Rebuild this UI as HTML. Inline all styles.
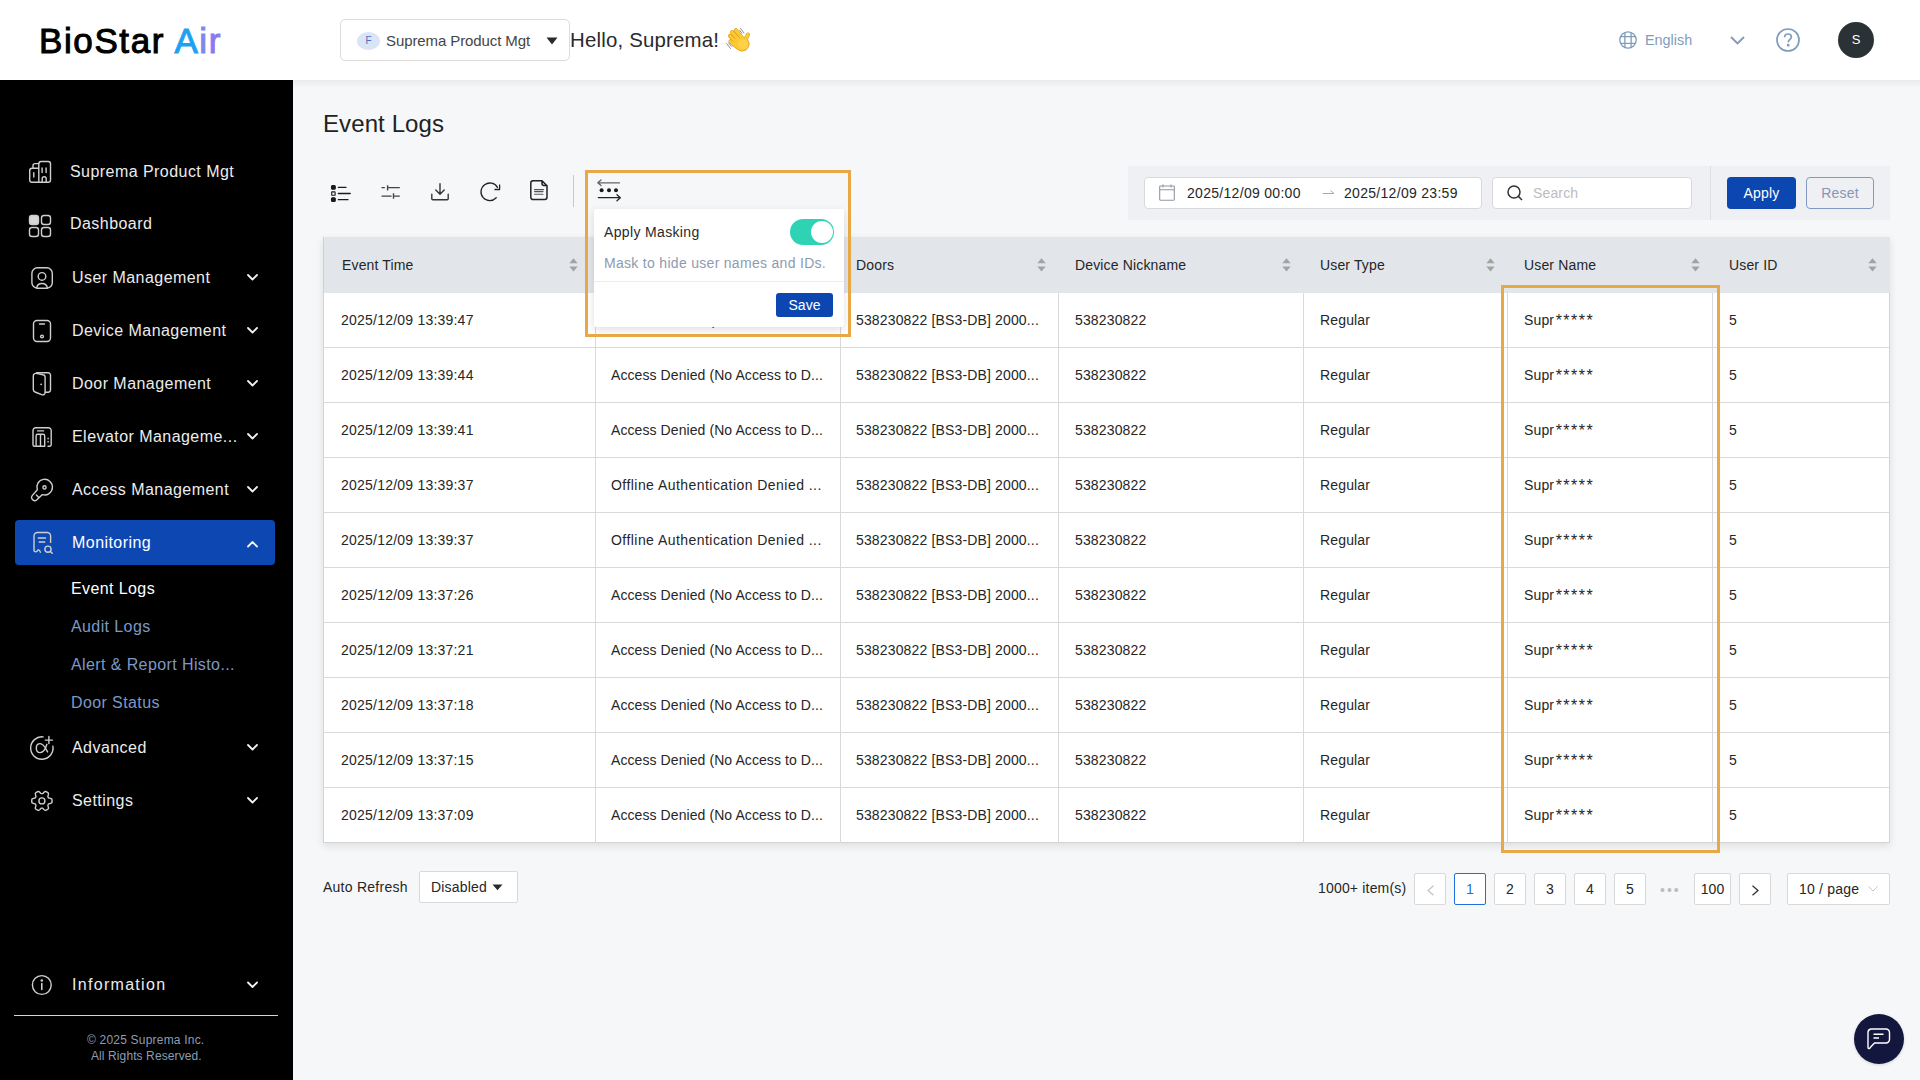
<!DOCTYPE html>
<html><head><meta charset="utf-8">
<style>
*{box-sizing:border-box;margin:0;padding:0}
html,body{width:1920px;height:1080px;overflow:hidden;background:#f6f7f9;font-family:"Liberation Sans",sans-serif;color:#222}
.t{position:absolute;white-space:nowrap;line-height:20px}
#header{position:absolute;left:0;top:0;width:1920px;height:80px;background:#fff;z-index:5}
#hshadow{position:absolute;left:293px;top:80px;width:1627px;height:8px;background:linear-gradient(rgba(0,0,0,0.05),rgba(0,0,0,0));z-index:5}
#sidebar{position:absolute;left:0;top:80px;width:293px;height:1000px;background:#000;z-index:4}
.nv{position:absolute;left:72px;margin-top:1px;font-size:16px;color:#ececec;letter-spacing:0.45px;white-space:nowrap;line-height:20px}
.sb{position:absolute;left:71px;margin-top:1px;font-size:16px;color:#7d98c6;letter-spacing:0.4px;white-space:nowrap;line-height:20px}
svg{position:absolute;overflow:visible}
.z6{position:absolute;left:0;top:0;width:0;height:0;z-index:6}
</style></head><body>
<!-- HEADER -->
<div id="header">
  <div class="t" style="left:39px;top:20.5px;font-size:35px;line-height:40px;letter-spacing:1.6px;color:#000;-webkit-text-stroke:1px #000">BioStar <span style="color:#1ea2ef;-webkit-text-stroke:1px #1ea2ef">A</span><span style="color:#7d86f0;-webkit-text-stroke:1px #7d86f0">i</span><span style="color:#8c79ef;-webkit-text-stroke:1px #8c79ef">r</span></div>
  <div style="position:absolute;left:340px;top:19px;width:230px;height:42px;border:1px solid #dcdcdc;border-radius:5px;background:#fff"></div>
  <div style="position:absolute;left:357px;top:32px;width:23px;height:18px;border-radius:50%;background:#d9e4f7;color:#4a6fbd;font-size:10px;line-height:18px;text-align:center">F</div>
  <div class="t" style="left:386px;top:31px;font-size:15px;color:#454545;letter-spacing:-0.1px">Suprema Product Mgt</div>
  <svg style="left:546px;top:37px" width="12" height="8"><path d="M0.5 0.5 L11.5 0.5 L6 7.5 Z" fill="#2a2a2a"/></svg>
  <div class="t" style="left:570px;top:28px;font-size:20.4px;line-height:24px;color:#2a2a2a;letter-spacing:0.2px">Hello, Suprema!</div>
  <!-- waving hand -->
  <svg style="left:720px;top:22px" width="36" height="36" viewBox="0 0 36 36" stroke-linecap="round">
    <g stroke="#e3a21e" stroke-width="4.2" fill="none">
      <path d="M15.8 8.3 L22.5 16.5 M12 10.2 L19.5 18.5 M10 14 L18 21.5 M10.5 19.5 L17.5 24.8 M27.9 12.6 L25 18.5"/>
    </g>
    <path d="M16.5 15 L25 16.5 Q28.6 18 29 20.5 Q29.5 25.5 25.5 28.3 Q21.5 30.3 17.5 27.5 L11.5 22.5 Z" fill="#fcc935" stroke="#e3a21e" stroke-width="0.9"/>
    <g stroke="#fcc935" stroke-width="3" fill="none">
      <path d="M15.8 8.3 L22.5 16.5 M12 10.2 L19.5 18.5 M10 14 L18 21.5 M10.5 19.5 L17.5 24.8 M27.9 12.6 L25 18.5"/>
    </g>
    <ellipse cx="23" cy="22.5" rx="5" ry="5" fill="#fdd24a"/>
    <g stroke="#6e6e6e" stroke-width="0.9" fill="none" opacity="0.85">
      <path d="M20.5 6.3 L24 11 M19.5 8.2 L22 11.3 M6.5 21.5 L10.5 26.5 M8.5 21 L11.8 24.5"/>
    </g>
  </svg>
  <!-- globe -->
  <svg style="left:1619px;top:31px" width="18" height="18" viewBox="0 0 18 18" fill="none" stroke="#7f9dbb" stroke-width="1.3">
    <circle cx="9" cy="9" r="8.2"/><path d="M6 1.3 Q5.6 9 6 16.7 M12 1.3 Q12.4 9 12 16.7 M1.2 5.6 H16.8 M1.2 12.4 H16.8"/>
  </svg>
  <div class="t" style="left:1645px;top:30px;font-size:14.4px;color:#7f9dbb">English</div>
  <svg style="left:1730px;top:36px" width="15" height="9" viewBox="0 0 15 9"><path d="M1 1 L7.5 7.5 L14 1" fill="none" stroke="#7f9dbb" stroke-width="1.9"/></svg>
  <svg style="left:1776px;top:28px" width="24" height="24" viewBox="0 0 24 24" fill="none" stroke="#7f9dbb" stroke-width="1.7">
    <circle cx="12" cy="12" r="11"/><path d="M8.6 9.3 C8.6 7.2 10.1 6 12 6 C13.9 6 15.4 7.2 15.4 9 C15.4 11.3 12.2 11.6 12.2 14.2"/><circle cx="12.2" cy="17.3" r="0.6" fill="#7f9dbb"/>
  </svg>
  <div style="position:absolute;left:1838px;top:22px;width:36px;height:36px;border-radius:50%;background:#2b3236;color:#fff;font-size:13px;line-height:36px;text-align:center">S</div>
</div>
<div id="hshadow"></div>
<!-- SIDEBAR -->
<div id="sidebar">
  <div style="position:absolute;left:15px;top:440px;width:260px;height:45px;border-radius:4px;background:#0d48b2"></div>
  <div style="position:absolute;left:14px;top:935px;width:264px;height:1px;background:#d4d4d4"></div>
</div>
<div class="z6">
  <div class="nv" style="left:70px;top:161px">Suprema Product Mgt</div>
  <div class="nv" style="left:70px;top:213px">Dashboard</div>
  <div class="nv" style="top:267px">User Management</div>
  <div class="nv" style="top:320px">Device Management</div>
  <div class="nv" style="top:373px">Door Management</div>
  <div class="nv" style="top:426px">Elevator Manageme...</div>
  <div class="nv" style="top:479px">Access Management</div>
  <div class="nv" style="top:532px;color:#fff">Monitoring</div>
  <div class="sb" style="top:578px;color:#fff">Event Logs</div>
  <div class="sb" style="top:616px">Audit Logs</div>
  <div class="sb" style="top:654px">Alert &amp; Report Histo...</div>
  <div class="sb" style="top:692px">Door Status</div>
  <div class="nv" style="top:737px">Advanced</div>
  <div class="nv" style="top:790px">Settings</div>
  <div class="nv" style="top:974px;letter-spacing:1.3px">Information</div>
  <div class="t" style="left:87px;top:1032px;font-size:12px;line-height:16px;color:#8d9cb3;letter-spacing:0.2px">© 2025 Suprema Inc.</div>
  <div class="t" style="left:91px;top:1048px;font-size:12px;line-height:16px;color:#8d9cb3;letter-spacing:0.1px">All Rights Reserved.</div>
  <!-- sidebar icons -->
  <svg style="left:0;top:0" width="293" height="1080" fill="none" stroke="#cfcfcf" stroke-width="1.4" stroke-linecap="round" stroke-linejoin="round">
    <!-- building -->
    <path d="M38.8 182.2 V163.8 a2.3 2.3 0 0 1 2.3-2.3 H48.2 a2.3 2.3 0 0 1 2.3 2.3 V179.9 a2.3 2.3 0 0 1-2.3 2.3 H32 a2.3 2.3 0 0 1-2.3-2.3 V170.6 a2.3 2.3 0 0 1 2.3-2.3 H38.8"/>
    <path d="M33 168.3 V165.6 a2 2 0 0 1 2-2 H38.8"/>
    <path d="M33.8 172.6 V177 M42.1 168 V172.5 M46.1 168 V172.5 M42.2 182.2 V178.8 a2 2 0 0 1 4 0 V182.2"/>
    <!-- dashboard -->
    <rect x="29.5" y="215.5" width="9" height="9" rx="2.5" fill="#d8d8d8"/>
    <rect x="41.5" y="215.5" width="9" height="9" rx="2.5"/>
    <rect x="29.5" y="227.5" width="9" height="9" rx="2.5"/>
    <rect x="41.5" y="227.5" width="9" height="9" rx="2.5"/>
    <!-- user -->
    <rect x="31.9" y="267.8" width="20.4" height="20.4" rx="5.5"/>
    <circle cx="42" cy="276.4" r="3.8"/>
    <path d="M36.6 288 C37.6 282 46.4 282 47.4 288"/>
    <!-- device -->
    <rect x="33.5" y="320.5" width="17" height="21" rx="3.5"/>
    <path d="M39.5 324 H44.5"/><circle cx="42" cy="336.5" r="1.4"/>
    <!-- door -->
    <path d="M33.3 376 a2.6 2.6 0 0 1 2.9-2.6 L43 374.8 a2.5 2.5 0 0 1 2.1 2.5 V392.6 a2.2 2.2 0 0 1-2.8 2.2 L35 392 a2.6 2.6 0 0 1-1.7-2.4 Z"/>
    <path d="M36.5 372.8 H48.2 a2.3 2.3 0 0 1 2.3 2.3 V389.9 a2.3 2.3 0 0 1-2.3 2.3 H45.2"/>
    <circle cx="41.1" cy="384.3" r="0.9" fill="#cfcfcf" stroke="none"/>
    <!-- elevator -->
    <path d="M35.2 446.3 H34.5 a1.5 1.5 0 0 1-1.5-1.5 V430.5 a2.8 2.8 0 0 1 2.8-2.8 H48.4 a2.8 2.8 0 0 1 2.8 2.8 V444.8 a1.5 1.5 0 0 1-1.5 1.5 H48"/>
    <path d="M37.6 430.9 H43.6 M36.1 446.3 V435.9 a1.7 1.7 0 0 1 1.7-1.7 H43 a1.7 1.7 0 0 1 1.7 1.7 V446.3 H36.1 M40.5 434.2 V446.3 M48.1 438.3 V438.8 M48.1 441.5 V442"/>
    <!-- key -->
    <path d="M37.3 489.8 A7.8 7.8 0 1 1 42.4 494.6 L36.6 500 Q34.8 501.4 33.1 500.1 L31.9 498.8 Q30.9 497.2 32.2 495.6 Z"/>
    <circle cx="44.5" cy="487.4" r="1.6"/>
    <path d="M36.4 495.1 L38.6 497.2"/>
    <!-- monitoring -->
    <path d="M50.6 542.4 V536 a3.5 3.5 0 0 0-3.5-3.5 H37.5 a3.5 3.5 0 0 0-3.5 3.5 V550.3 a1.8 1.8 0 0 0 2.8 1.2 C38.3 549.3 39.2 549 40.4 552.2"/>
    <path d="M38.3 538 H45.5 M39.2 542 H44.8"/>
    <circle cx="48" cy="549.2" r="3.1"/><path d="M50.2 551.4 L52.3 553.3"/>
    <!-- advanced -->
    <path d="M43.1 736.9 A11.2 11.2 0 1 0 52.9 746.2"/>
    <path d="M45.3 740.1 H52.5 M48.9 736.5 V743.6"/>
    <path d="M46.9 744.3 C45.9 747.8 44.5 752.6 40.1 752.6 C37.6 752.6 36.3 750.6 36.3 748.3 C36.3 745.5 38 743.6 40.2 743.6 C43.5 743.6 45.4 748 47.6 751.9"/>
    <!-- settings -->
    <path d="M52.05 800.90 L52.05 801.17 L52.04 801.43 L52.02 801.70 L51.99 801.96 L51.96 802.22 L51.93 802.49 L51.85 802.74 L51.49 802.94 L51.11 803.11 L50.72 803.26 L50.33 803.40 L49.95 803.52 L49.58 803.62 L49.23 803.72 L48.92 803.81 L48.64 803.90 L48.44 804.02 L48.36 804.19 L48.27 804.36 L48.18 804.52 L48.08 804.69 L47.98 804.85 L47.87 805.01 L47.87 805.24 L47.93 805.52 L48.01 805.84 L48.10 806.19 L48.19 806.56 L48.28 806.95 L48.36 807.36 L48.42 807.77 L48.46 808.19 L48.47 808.60 L48.29 808.79 L48.08 808.95 L47.87 809.11 L47.65 809.26 L47.43 809.41 L47.20 809.55 L46.98 809.69 L46.74 809.82 L46.51 809.94 L46.27 810.06 L46.03 810.17 L45.78 810.28 L45.54 810.38 L45.28 810.44 L44.93 810.23 L44.59 809.99 L44.26 809.72 L43.95 809.45 L43.66 809.18 L43.38 808.91 L43.13 808.66 L42.89 808.43 L42.67 808.23 L42.47 808.13 L42.28 808.14 L42.09 808.15 L41.90 808.15 L41.71 808.15 L41.52 808.14 L41.33 808.13 L41.13 808.23 L40.91 808.43 L40.67 808.66 L40.42 808.91 L40.14 809.18 L39.85 809.45 L39.54 809.72 L39.21 809.99 L38.87 810.23 L38.52 810.44 L38.26 810.38 L38.02 810.28 L37.77 810.17 L37.53 810.06 L37.29 809.94 L37.06 809.82 L36.83 809.69 L36.60 809.55 L36.37 809.41 L36.15 809.26 L35.93 809.11 L35.72 808.95 L35.51 808.79 L35.33 808.60 L35.34 808.19 L35.38 807.77 L35.44 807.36 L35.52 806.95 L35.61 806.56 L35.70 806.19 L35.79 805.84 L35.87 805.52 L35.93 805.24 L35.93 805.01 L35.82 804.85 L35.72 804.69 L35.62 804.52 L35.53 804.36 L35.44 804.19 L35.36 804.02 L35.16 803.90 L34.88 803.81 L34.57 803.72 L34.22 803.62 L33.85 803.52 L33.47 803.40 L33.08 803.26 L32.69 803.11 L32.31 802.94 L31.95 802.74 L31.87 802.49 L31.84 802.22 L31.81 801.96 L31.78 801.70 L31.76 801.43 L31.75 801.17 L31.75 800.90 L31.75 800.63 L31.76 800.37 L31.78 800.10 L31.81 799.84 L31.84 799.58 L31.87 799.31 L31.95 799.06 L32.31 798.86 L32.69 798.69 L33.08 798.54 L33.47 798.40 L33.85 798.28 L34.22 798.18 L34.57 798.08 L34.88 797.99 L35.16 797.90 L35.36 797.78 L35.44 797.61 L35.53 797.44 L35.62 797.27 L35.72 797.11 L35.82 796.95 L35.93 796.79 L35.93 796.56 L35.87 796.28 L35.79 795.96 L35.70 795.61 L35.61 795.24 L35.52 794.85 L35.44 794.44 L35.38 794.03 L35.34 793.61 L35.33 793.20 L35.51 793.01 L35.72 792.85 L35.93 792.69 L36.15 792.54 L36.37 792.39 L36.60 792.25 L36.82 792.11 L37.06 791.98 L37.29 791.86 L37.53 791.74 L37.77 791.63 L38.02 791.52 L38.26 791.42 L38.52 791.36 L38.87 791.57 L39.21 791.81 L39.54 792.08 L39.85 792.35 L40.14 792.62 L40.42 792.89 L40.67 793.14 L40.91 793.37 L41.13 793.57 L41.33 793.67 L41.52 793.66 L41.71 793.65 L41.90 793.65 L42.09 793.65 L42.28 793.66 L42.47 793.67 L42.67 793.57 L42.89 793.37 L43.13 793.14 L43.38 792.89 L43.66 792.62 L43.95 792.35 L44.26 792.08 L44.59 791.81 L44.93 791.57 L45.28 791.36 L45.54 791.42 L45.78 791.52 L46.03 791.63 L46.27 791.74 L46.51 791.86 L46.74 791.98 L46.98 792.11 L47.20 792.25 L47.43 792.39 L47.65 792.54 L47.87 792.69 L48.08 792.85 L48.29 793.01 L48.47 793.20 L48.46 793.61 L48.42 794.03 L48.36 794.44 L48.28 794.85 L48.19 795.24 L48.10 795.61 L48.01 795.96 L47.93 796.28 L47.87 796.56 L47.87 796.79 L47.98 796.95 L48.08 797.11 L48.18 797.27 L48.27 797.44 L48.36 797.61 L48.44 797.78 L48.64 797.90 L48.92 797.99 L49.23 798.08 L49.58 798.18 L49.95 798.28 L50.33 798.40 L50.72 798.54 L51.11 798.69 L51.49 798.86 L51.85 799.06 L51.93 799.31 L51.96 799.58 L51.99 799.84 L52.02 800.10 L52.04 800.37 L52.05 800.63 Z"/>
    <circle cx="41.9" cy="800.9" r="3"/>
    <!-- info -->
    <circle cx="41.8" cy="985" r="9.4"/>
    <path d="M41.8 983.5 V989.5" stroke-width="1.6"/><circle cx="41.8" cy="980.5" r="0.6" fill="#cfcfcf"/>
    <!-- chevrons -->
    <g stroke="#f2f2f2" stroke-width="1.8">
      <path d="M248 275 L252.5 279.5 L257 275"/>
      <path d="M248 328 L252.5 332.5 L257 328"/>
      <path d="M248 381 L252.5 385.5 L257 381"/>
      <path d="M248 434 L252.5 438.5 L257 434"/>
      <path d="M248 487 L252.5 491.5 L257 487"/>
      <path d="M248 546.5 L252.5 542 L257 546.5"/>
      <path d="M248 745 L252.5 749.5 L257 745"/>
      <path d="M248 798 L252.5 802.5 L257 798"/>
      <path d="M248 982.5 L252.5 987 L257 982.5"/>
    </g>
  </svg>
</div>
<!-- MAIN -->
<style>.td{font-size:14px;color:#262626;letter-spacing:0.15px;line-height:20px}.pg{position:absolute;top:873px;width:32px;height:32px;background:#fff;border:1px solid #d9d9d9;border-radius:2px;font-size:14px;line-height:30px;text-align:center;color:#262626}</style>
<div class="t" style="left:323px;top:109px;font-size:24px;line-height:30px;color:#222;letter-spacing:0.1px">Event Logs</div>
<div id="tbl" style="position:absolute;left:323px;top:237px;width:1567px;height:606px;background:#fff;border:1px solid #d4d4d4;border-top:none;box-shadow:0 3px 8px rgba(0,0,0,0.10)"></div>
<div style="position:absolute;left:323px;top:237px;width:1567px;height:56px;background:#e2e5ea;border-left:1px solid #cdd0d5"></div>
<div style="position:absolute;left:323px;top:347px;width:1567px;height:1px;background:#d9d9d9"></div>
<div style="position:absolute;left:323px;top:402px;width:1567px;height:1px;background:#d9d9d9"></div>
<div style="position:absolute;left:323px;top:457px;width:1567px;height:1px;background:#d9d9d9"></div>
<div style="position:absolute;left:323px;top:512px;width:1567px;height:1px;background:#d9d9d9"></div>
<div style="position:absolute;left:323px;top:567px;width:1567px;height:1px;background:#d9d9d9"></div>
<div style="position:absolute;left:323px;top:622px;width:1567px;height:1px;background:#d9d9d9"></div>
<div style="position:absolute;left:323px;top:677px;width:1567px;height:1px;background:#d9d9d9"></div>
<div style="position:absolute;left:323px;top:732px;width:1567px;height:1px;background:#d9d9d9"></div>
<div style="position:absolute;left:323px;top:787px;width:1567px;height:1px;background:#d9d9d9"></div>
<div style="position:absolute;left:595px;top:293px;width:1px;height:550px;background:#d9d9d9"></div>
<div style="position:absolute;left:840px;top:293px;width:1px;height:550px;background:#d9d9d9"></div>
<div style="position:absolute;left:1058px;top:293px;width:1px;height:550px;background:#d9d9d9"></div>
<div style="position:absolute;left:1303px;top:293px;width:1px;height:550px;background:#d9d9d9"></div>
<div style="position:absolute;left:1507px;top:293px;width:1px;height:550px;background:#d9d9d9"></div>
<div style="position:absolute;left:1712px;top:293px;width:1px;height:550px;background:#d9d9d9"></div>
<div class="t td" style="left:342px;top:255px">Event Time</div>
<svg style="left:568.5px;top:257.5px" width="9" height="14" viewBox="0 0 9 14"><path d="M0.3 5.3 L4.5 0.3 L8.7 5.3 Z M0.3 8.6 L4.5 13.6 L8.7 8.6 Z" fill="#a3a3a3"/></svg>
<div class="t td" style="left:612px;top:255px">Event</div>
<svg style="left:813.5px;top:257.5px" width="9" height="14" viewBox="0 0 9 14"><path d="M0.3 5.3 L4.5 0.3 L8.7 5.3 Z M0.3 8.6 L4.5 13.6 L8.7 8.6 Z" fill="#a3a3a3"/></svg>
<div class="t td" style="left:856px;top:255px">Doors</div>
<svg style="left:1036.5px;top:257.5px" width="9" height="14" viewBox="0 0 9 14"><path d="M0.3 5.3 L4.5 0.3 L8.7 5.3 Z M0.3 8.6 L4.5 13.6 L8.7 8.6 Z" fill="#a3a3a3"/></svg>
<div class="t td" style="left:1075px;top:255px">Device Nickname</div>
<svg style="left:1281.5px;top:257.5px" width="9" height="14" viewBox="0 0 9 14"><path d="M0.3 5.3 L4.5 0.3 L8.7 5.3 Z M0.3 8.6 L4.5 13.6 L8.7 8.6 Z" fill="#a3a3a3"/></svg>
<div class="t td" style="left:1320px;top:255px">User Type</div>
<svg style="left:1485.5px;top:257.5px" width="9" height="14" viewBox="0 0 9 14"><path d="M0.3 5.3 L4.5 0.3 L8.7 5.3 Z M0.3 8.6 L4.5 13.6 L8.7 8.6 Z" fill="#a3a3a3"/></svg>
<div class="t td" style="left:1524px;top:255px">User Name</div>
<svg style="left:1690.5px;top:257.5px" width="9" height="14" viewBox="0 0 9 14"><path d="M0.3 5.3 L4.5 0.3 L8.7 5.3 Z M0.3 8.6 L4.5 13.6 L8.7 8.6 Z" fill="#a3a3a3"/></svg>
<div class="t td" style="left:1729px;top:255px">User ID</div>
<svg style="left:1867.5px;top:257.5px" width="9" height="14" viewBox="0 0 9 14"><path d="M0.3 5.3 L4.5 0.3 L8.7 5.3 Z M0.3 8.6 L4.5 13.6 L8.7 8.6 Z" fill="#a3a3a3"/></svg>
<div class="t td" style="left:341px;top:310px;letter-spacing:0.22px">2025/12/09 13:39:47</div>
<div class="t td" style="left:611px;top:310px;letter-spacing:0.08px">Access Denied (No Access to D...</div>
<div class="t td" style="left:856px;top:310px">538230822 [BS3-DB] 2000...</div>
<div class="t td" style="left:1075px;top:310px">538230822</div>
<div class="t td" style="left:1320px;top:310px">Regular</div>
<div class="t td" style="left:1524px;top:310px">Supr<span style="font-size:16px;letter-spacing:1.45px;line-height:0;margin-left:1.5px;position:relative;top:0.5px">*****</span></div>
<div class="t td" style="left:1729px;top:310px">5</div>
<div class="t td" style="left:341px;top:365px;letter-spacing:0.22px">2025/12/09 13:39:44</div>
<div class="t td" style="left:611px;top:365px;letter-spacing:0.08px">Access Denied (No Access to D...</div>
<div class="t td" style="left:856px;top:365px">538230822 [BS3-DB] 2000...</div>
<div class="t td" style="left:1075px;top:365px">538230822</div>
<div class="t td" style="left:1320px;top:365px">Regular</div>
<div class="t td" style="left:1524px;top:365px">Supr<span style="font-size:16px;letter-spacing:1.45px;line-height:0;margin-left:1.5px;position:relative;top:0.5px">*****</span></div>
<div class="t td" style="left:1729px;top:365px">5</div>
<div class="t td" style="left:341px;top:420px;letter-spacing:0.22px">2025/12/09 13:39:41</div>
<div class="t td" style="left:611px;top:420px;letter-spacing:0.08px">Access Denied (No Access to D...</div>
<div class="t td" style="left:856px;top:420px">538230822 [BS3-DB] 2000...</div>
<div class="t td" style="left:1075px;top:420px">538230822</div>
<div class="t td" style="left:1320px;top:420px">Regular</div>
<div class="t td" style="left:1524px;top:420px">Supr<span style="font-size:16px;letter-spacing:1.45px;line-height:0;margin-left:1.5px;position:relative;top:0.5px">*****</span></div>
<div class="t td" style="left:1729px;top:420px">5</div>
<div class="t td" style="left:341px;top:475px;letter-spacing:0.22px">2025/12/09 13:39:37</div>
<div class="t td" style="left:611px;top:475px;letter-spacing:0.45px">Offline Authentication Denied ...</div>
<div class="t td" style="left:856px;top:475px">538230822 [BS3-DB] 2000...</div>
<div class="t td" style="left:1075px;top:475px">538230822</div>
<div class="t td" style="left:1320px;top:475px">Regular</div>
<div class="t td" style="left:1524px;top:475px">Supr<span style="font-size:16px;letter-spacing:1.45px;line-height:0;margin-left:1.5px;position:relative;top:0.5px">*****</span></div>
<div class="t td" style="left:1729px;top:475px">5</div>
<div class="t td" style="left:341px;top:530px;letter-spacing:0.22px">2025/12/09 13:39:37</div>
<div class="t td" style="left:611px;top:530px;letter-spacing:0.45px">Offline Authentication Denied ...</div>
<div class="t td" style="left:856px;top:530px">538230822 [BS3-DB] 2000...</div>
<div class="t td" style="left:1075px;top:530px">538230822</div>
<div class="t td" style="left:1320px;top:530px">Regular</div>
<div class="t td" style="left:1524px;top:530px">Supr<span style="font-size:16px;letter-spacing:1.45px;line-height:0;margin-left:1.5px;position:relative;top:0.5px">*****</span></div>
<div class="t td" style="left:1729px;top:530px">5</div>
<div class="t td" style="left:341px;top:585px;letter-spacing:0.22px">2025/12/09 13:37:26</div>
<div class="t td" style="left:611px;top:585px;letter-spacing:0.08px">Access Denied (No Access to D...</div>
<div class="t td" style="left:856px;top:585px">538230822 [BS3-DB] 2000...</div>
<div class="t td" style="left:1075px;top:585px">538230822</div>
<div class="t td" style="left:1320px;top:585px">Regular</div>
<div class="t td" style="left:1524px;top:585px">Supr<span style="font-size:16px;letter-spacing:1.45px;line-height:0;margin-left:1.5px;position:relative;top:0.5px">*****</span></div>
<div class="t td" style="left:1729px;top:585px">5</div>
<div class="t td" style="left:341px;top:640px;letter-spacing:0.22px">2025/12/09 13:37:21</div>
<div class="t td" style="left:611px;top:640px;letter-spacing:0.08px">Access Denied (No Access to D...</div>
<div class="t td" style="left:856px;top:640px">538230822 [BS3-DB] 2000...</div>
<div class="t td" style="left:1075px;top:640px">538230822</div>
<div class="t td" style="left:1320px;top:640px">Regular</div>
<div class="t td" style="left:1524px;top:640px">Supr<span style="font-size:16px;letter-spacing:1.45px;line-height:0;margin-left:1.5px;position:relative;top:0.5px">*****</span></div>
<div class="t td" style="left:1729px;top:640px">5</div>
<div class="t td" style="left:341px;top:695px;letter-spacing:0.22px">2025/12/09 13:37:18</div>
<div class="t td" style="left:611px;top:695px;letter-spacing:0.08px">Access Denied (No Access to D...</div>
<div class="t td" style="left:856px;top:695px">538230822 [BS3-DB] 2000...</div>
<div class="t td" style="left:1075px;top:695px">538230822</div>
<div class="t td" style="left:1320px;top:695px">Regular</div>
<div class="t td" style="left:1524px;top:695px">Supr<span style="font-size:16px;letter-spacing:1.45px;line-height:0;margin-left:1.5px;position:relative;top:0.5px">*****</span></div>
<div class="t td" style="left:1729px;top:695px">5</div>
<div class="t td" style="left:341px;top:750px;letter-spacing:0.22px">2025/12/09 13:37:15</div>
<div class="t td" style="left:611px;top:750px;letter-spacing:0.08px">Access Denied (No Access to D...</div>
<div class="t td" style="left:856px;top:750px">538230822 [BS3-DB] 2000...</div>
<div class="t td" style="left:1075px;top:750px">538230822</div>
<div class="t td" style="left:1320px;top:750px">Regular</div>
<div class="t td" style="left:1524px;top:750px">Supr<span style="font-size:16px;letter-spacing:1.45px;line-height:0;margin-left:1.5px;position:relative;top:0.5px">*****</span></div>
<div class="t td" style="left:1729px;top:750px">5</div>
<div class="t td" style="left:341px;top:805px;letter-spacing:0.22px">2025/12/09 13:37:09</div>
<div class="t td" style="left:611px;top:805px;letter-spacing:0.08px">Access Denied (No Access to D...</div>
<div class="t td" style="left:856px;top:805px">538230822 [BS3-DB] 2000...</div>
<div class="t td" style="left:1075px;top:805px">538230822</div>
<div class="t td" style="left:1320px;top:805px">Regular</div>
<div class="t td" style="left:1524px;top:805px">Supr<span style="font-size:16px;letter-spacing:1.45px;line-height:0;margin-left:1.5px;position:relative;top:0.5px">*****</span></div>
<div class="t td" style="left:1729px;top:805px">5</div>
<!-- TOOLBAR -->
<svg style="left:0;top:0" width="1" height="1" fill="none" stroke="#2b2b2b" stroke-width="1.5" stroke-linecap="round" stroke-linejoin="round">
  <!-- list check -->
  <g transform="translate(331,185)">
    <rect x="0.6" y="0.6" width="3.6" height="3.6" rx="0.9" fill="#1a1a1a" stroke="#1a1a1a" stroke-width="1.3"/>
    <rect x="0.7" y="6.9" width="3.4" height="3.4" rx="0.3" stroke="#1a1a1a" stroke-width="1.1"/>
    <rect x="0.6" y="12.8" width="3.6" height="3.6" rx="0.9" fill="#1a1a1a" stroke="#1a1a1a" stroke-width="1.3"/>
    <path d="M7.3 2.3 H15 M7.3 8.5 H19.2 M7.3 14.7 H17" stroke="#1a1a1a" stroke-width="1.3"/>
  </g>
  <!-- sliders -->
  <g transform="translate(381,185)" stroke="#444">
    <path d="M0.5 2.6 H3.8 M6.6 2.6 H18.8 M6.6 0.2 V5.6 M0.5 11.1 H10.6 M12.5 11.1 H18.8 M12.5 8.3 V13.7" stroke-width="1.4" stroke-linecap="butt"/>
  </g>
  <!-- download -->
  <g transform="translate(431,183)" stroke="#333">
    <path d="M9 0.8 V11 M4.8 7 L9 11.2 L13.2 7 M0.8 11.3 V15.8 a1 1 0 0 0 1 1 H16.2 a1 1 0 0 0 1-1 V11.3" stroke-width="1.4"/>
  </g>
  <!-- refresh -->
  <g transform="translate(481,183)" stroke="#222">
    <path d="M16.42 4.4 A8.8 8.8 0 1 0 15.24 14.8" stroke-width="1.3"/>
    <path d="M13.5 6.5 H18.6 V1.6" stroke-width="1.3" stroke-linecap="butt"/>
  </g>
  <!-- doc -->
  <g transform="translate(530,180)" stroke="#222">
    <path d="M3 0.8 H12 L17 5.8 V17.3 a2.2 2.2 0 0 1-2.2 2.2 H3 a2.2 2.2 0 0 1-2.2-2.2 V3 A2.2 2.2 0 0 1 3 0.8 Z M12 0.8 V3.5 a2 2 0 0 0 2 2 H17" stroke-width="1.5"/>
    <path d="M4.5 9.6 H13.5 M4.5 11.6 H13 M4.5 14.2 H13" stroke-width="1.1" stroke="#555"/>
  </g>
  <!-- masking -->
  <g transform="translate(597,180)" stroke="#222">
    <path d="M0.8 2.8 H22.5 M0.8 2.8 L4 0 M0.8 2.8 L4 5.6" stroke-width="1.3" stroke="#666"/>
    <circle cx="4.6" cy="10.2" r="2" fill="#1a1a1a" stroke="none"/>
    <circle cx="12" cy="10.2" r="2" fill="#1a1a1a" stroke="none"/>
    <circle cx="19" cy="10.2" r="2" fill="#1a1a1a" stroke="none"/>
    <path d="M1.4 17.7 H23.3 M23.3 17.7 L20 14.7 M23.3 17.7 L20 20.7" stroke-width="1.3"/>
  </g>
</svg>
<div style="position:absolute;left:573px;top:175px;width:1px;height:32px;background:#cfc6c0"></div>

<!-- FILTER PANEL -->
<div style="position:absolute;left:1128px;top:166px;width:762px;height:54px;background:#eef0f3"></div>
<div style="position:absolute;left:1710px;top:166px;width:1px;height:54px;background:#dcdfe4"></div>
<div style="position:absolute;left:1144px;top:177px;width:338px;height:32px;background:#fff;border:1px solid #d9d9d9;border-radius:4px"></div>
<svg style="left:1159px;top:185px" width="16" height="16" viewBox="0 0 16 16" fill="none" stroke="#8e97a7" stroke-width="1.1">
  <rect x="0.7" y="1" width="14.6" height="14.2" rx="0.6"/><path d="M0.7 4.8 H15.3 M4 -0.6 V2.6 M12 -0.6 V2.6"/>
</svg>
<div class="t td" style="left:1187px;top:183px;letter-spacing:0.3px">2025/12/09 00:00</div>
<svg style="left:1322px;top:189px" width="13" height="6" viewBox="0 0 13 6"><path d="M0.5 4.5 H12 L8.5 1.5" fill="none" stroke="#aaa" stroke-width="1"/></svg>
<div class="t td" style="left:1344px;top:183px;letter-spacing:0.3px">2025/12/09 23:59</div>
<div style="position:absolute;left:1492px;top:177px;width:200px;height:32px;background:#fff;border:1px solid #d9d9d9;border-radius:4px"></div>
<svg style="left:1507px;top:185px" width="16" height="16" viewBox="0 0 16 16" fill="none" stroke="#333" stroke-width="1.5">
  <circle cx="7" cy="7" r="6"/><path d="M11.4 11.4 L15 15"/>
</svg>
<div class="t td" style="left:1533px;top:183px;color:#bdbdbd">Search</div>
<div style="position:absolute;left:1727px;top:177px;width:69px;height:32px;background:#0c46b1;border-radius:4px;color:#fff;font-size:14px;line-height:32px;text-align:center;letter-spacing:0.2px">Apply</div>
<div style="position:absolute;left:1806px;top:177px;width:68px;height:32px;background:transparent;border:1px solid #8299c4;border-radius:4px;color:#8796b6;font-size:14px;line-height:30px;text-align:center;letter-spacing:0.2px">Reset</div>

<!-- POPOVER -->
<div style="position:absolute;left:594px;top:209px;width:250px;height:118px;background:#fff;border-radius:2px;box-shadow:0 3px 10px rgba(0,0,0,0.13);z-index:2"></div>
<div style="position:absolute;left:594px;top:281px;width:250px;height:1px;background:#ececec;z-index:2"></div>
<div class="t td" style="left:604px;top:222px;color:#2a2a2a;letter-spacing:0.35px;z-index:2">Apply Masking</div>
<div style="position:absolute;left:790px;top:219px;width:44px;height:26px;border-radius:13px;background:#2ed3b3;z-index:2"></div>
<div style="position:absolute;left:811px;top:221px;width:22px;height:22px;border-radius:50%;background:#fff;z-index:2"></div>
<div class="t td" style="left:604px;top:253px;color:#8d9bb0;letter-spacing:0.3px;z-index:2">Mask to hide user names and IDs.</div>
<div style="position:absolute;left:776px;top:293px;width:57px;height:24px;background:#0c46b1;border-radius:3px;color:#fff;font-size:14px;line-height:24px;text-align:center;z-index:2">Save</div>

<!-- ORANGE HIGHLIGHTS -->
<div style="position:absolute;left:585px;top:170px;width:266px;height:167px;border:3px solid #e8a846;z-index:3"></div>
<div style="position:absolute;left:1501px;top:285px;width:219px;height:568px;border:3px solid #e8a846;z-index:3"></div>

<!-- FOOTER -->
<div class="t td" style="left:323px;top:877px;letter-spacing:0.25px">Auto Refresh</div>
<div style="position:absolute;left:419px;top:871px;width:99px;height:32px;background:#fff;border:1px solid #d9d9d9;border-radius:2px"></div>
<div class="t td" style="left:431px;top:877px;letter-spacing:0.2px">Disabled</div>
<svg style="left:492px;top:884px" width="11" height="7"><path d="M0.5 0.5 L10.5 0.5 L5.5 6.3 Z" fill="#2a2a2a"/></svg>

<div class="t td" style="left:1318px;top:878px;letter-spacing:0.18px">1000+ item(s)</div>
<div class="pg" style="left:1414px"></div>
<svg style="left:1426px;top:884.5px" width="9" height="11"><path d="M7.5 0.8 L2 5.5 L7.5 10.2" fill="none" stroke="#c4c4c4" stroke-width="1.2"/></svg>
<div class="pg" style="left:1454px;border-color:#1f6fe0;color:#1f6fe0">1</div>
<div class="pg" style="left:1494px">2</div>
<div class="pg" style="left:1534px">3</div>
<div class="pg" style="left:1574px">4</div>
<div class="pg" style="left:1614px">5</div>
<div class="t" style="left:1660px;top:880px;color:#bdbdbd;font-size:14px;letter-spacing:2px">•••</div>
<div class="pg" style="left:1694px;width:37px">100</div>
<div class="pg" style="left:1739px"></div>
<svg style="left:1751px;top:884.5px" width="9" height="11"><path d="M1.5 0.8 L7 5.5 L1.5 10.2" fill="none" stroke="#333" stroke-width="1.3"/></svg>
<div style="position:absolute;left:1787px;top:873px;width:103px;height:32px;background:#fff;border:1px solid #d9d9d9;border-radius:2px"></div>
<div class="t td" style="left:1799px;top:879px;letter-spacing:0.2px">10 / page</div>
<svg style="left:1868px;top:886px" width="10" height="6"><path d="M0.5 0.5 L5 5 L9.5 0.5" fill="none" stroke="#c4c4c4" stroke-width="1"/></svg>

<!-- CHAT -->
<div style="position:absolute;left:1854px;top:1014px;width:50px;height:50px;border-radius:50%;background:#13173e;box-shadow:0 1px 3px rgba(0,0,0,0.15)"></div>
<svg style="left:1867px;top:1028px" width="24" height="22" viewBox="0 0 24 22" fill="none" stroke="#fff" stroke-width="1.4" stroke-linejoin="round">
  <path d="M4 1 H19 a3.5 3.5 0 0 1 3.5 3.5 V11.5 a3.5 3.5 0 0 1-3.5 3.5 H7.5 L3 19.8 a1 1 0 0 1-2-0.5 V4.5 A3.5 3.5 0 0 1 4 1 Z"/>
  <path d="M6.5 6.3 H16.5 M6.5 10 H12" stroke-width="1.6"/>
</svg>
</body></html>
